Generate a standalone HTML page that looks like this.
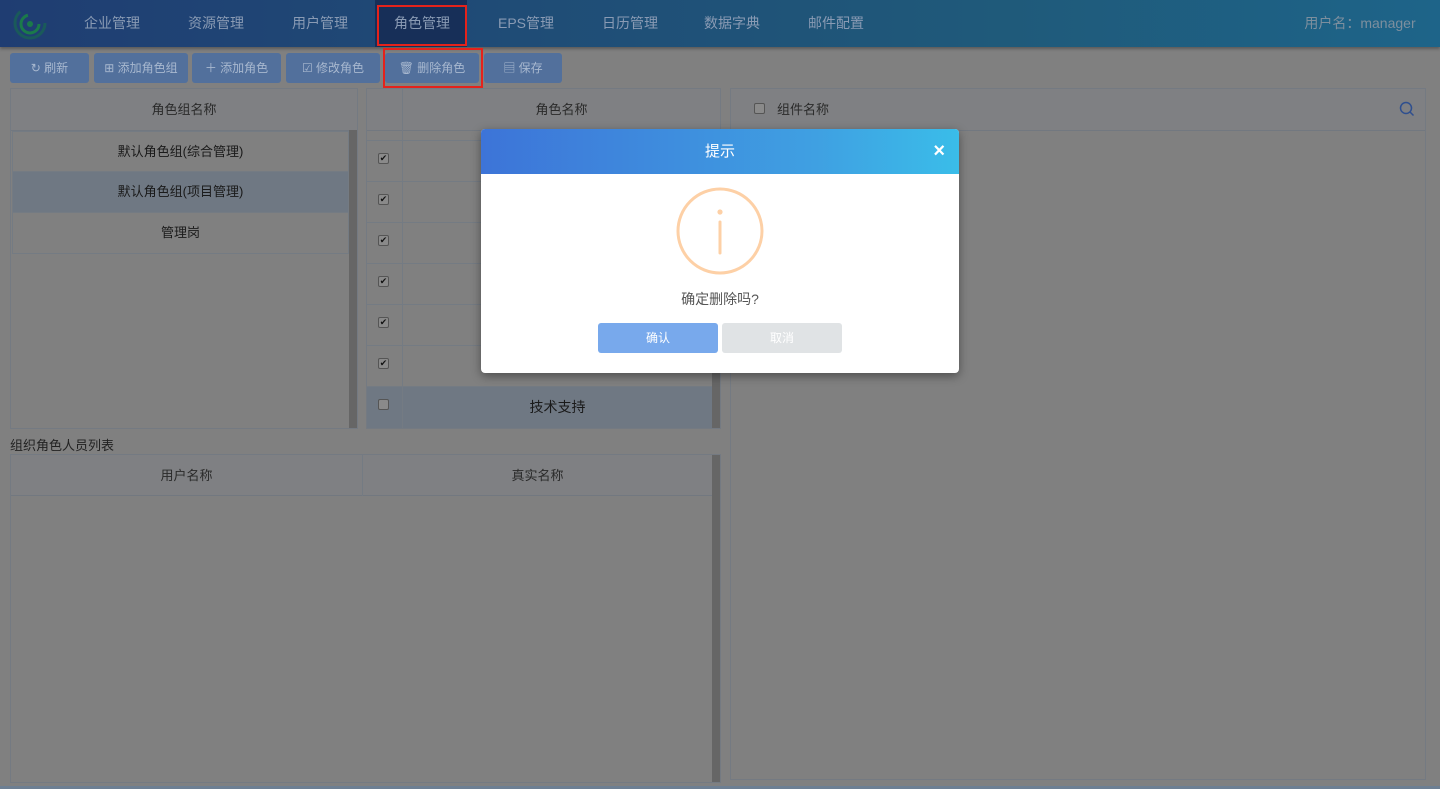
<!DOCTYPE html>
<html style="background:#808080"><head><meta charset="utf-8"><style>
*{margin:0;padding:0;box-sizing:border-box}
body{width:1440px;height:789px;background:#808080;position:relative;overflow:hidden;font-family:"Liberation Sans","Noto Sans CJK SC",sans-serif;font-size:13px;color:#1a1a1a}
.a{position:absolute}
.nav{left:0;top:0;width:1440px;height:47px;background:linear-gradient(90deg,#1f3d72,#1f5a7a 70%,#1e6489);box-shadow:0 2px 3px rgba(0,0,0,.3)}
.ni{top:0;height:47px;line-height:46px;color:#8a9bb4;font-size:14px;text-align:center}
.btn{top:53px;height:30px;background:#52709c;border-radius:3px;color:#a8b8cf;font-size:12px;line-height:30px;text-align:center}
.red{border:2px solid #e5221b}
.panel{border:1px solid #747a82}
.hd{background:#7f8083;border-bottom:1px solid #727880;text-align:center;line-height:41px;color:#2a2a2a}
.row{text-align:center;line-height:40px;border:1px solid #747b83;border-top:none}
.cb{width:11px;height:11px;border:1px solid #555;border-radius:2px;background:#8a8a8a;font-size:9px;line-height:9px;text-align:center;color:#111}
.sb{background:#666}
</style></head><body>
<div class="a nav"></div>
<svg class="a" style="left:12px;top:5px" width="36" height="36" viewBox="0 0 36 36"><circle cx="18" cy="18" r="15" fill="none" stroke="#1a5a5a" stroke-width="3" stroke-dasharray="60 40"/><circle cx="18" cy="19" r="9" fill="none" stroke="#1b7a4a" stroke-width="3" stroke-dasharray="40 20"/><circle cx="18" cy="19" r="3" fill="#1b7a4a"/></svg>
<div class="a ni" style="left:72px;width:80px">企业管理</div>
<div class="a ni" style="left:176px;width:80px">资源管理</div>
<div class="a ni" style="left:280px;width:80px">用户管理</div>
<div class="a" style="left:375px;top:0;width:92px;height:47px;background:#172f58"></div>
<div class="a red" style="left:377px;top:5px;width:90px;height:41px"></div>
<div class="a ni" style="left:377px;width:90px">角色管理</div>
<div class="a ni" style="left:486px;width:80px">EPS管理</div>
<div class="a ni" style="left:590px;width:80px">日历管理</div>
<div class="a ni" style="left:692px;width:80px">数据字典</div>
<div class="a ni" style="left:796px;width:80px">邮件配置</div>
<div class="a ni" style="left:1290px;width:140px;color:#7d8f9e">用户名：manager</div>

<div class="a btn" style="left:10px;width:79px">↻ 刷新</div>
<div class="a btn" style="left:94px;width:94px">⊞ 添加角色组</div>
<div class="a btn" style="left:192px;width:89px">＋ 添加角色</div>
<div class="a btn" style="left:286px;width:94px">☑ 修改角色</div>
<div class="a btn" style="left:385px;width:94px">🗑 删除角色</div>
<div class="a red" style="left:383px;top:48px;width:100px;height:40px"></div>
<div class="a btn" style="left:484px;width:78px">▤ 保存</div>

<div class="a panel" style="left:10px;top:88px;width:348px;height:341px"></div>
<div class="a hd" style="left:11px;top:89px;width:346px;height:42px">角色组名称</div>
<div class="a row" style="left:12px;top:131px;width:337px;height:41px;border-top:1px solid #747b83">默认角色组(综合管理)</div>
<div class="a row" style="left:12px;top:172px;width:337px;height:41px;background:#6f7883">默认角色组(项目管理)</div>
<div class="a row" style="left:12px;top:213px;width:337px;height:41px">管理岗</div>
<div class="a sb" style="left:349px;top:130px;width:8px;height:298px"></div>

<div class="a panel" style="left:366px;top:88px;width:355px;height:341px"></div>
<div class="a hd" style="left:367px;top:89px;width:353px;height:42px;padding-left:36px">角色名称</div>
<div class="a" style="left:402px;top:89px;width:1px;height:338px;background:#747b83"></div>
<div class="a" style="left:367px;top:140px;width:345px;height:1px;background:#747b83"></div>
<div class="a" style="left:367px;top:181px;width:345px;height:1px;background:#747b83"></div>
<div class="a" style="left:367px;top:222px;width:345px;height:1px;background:#747b83"></div>
<div class="a" style="left:367px;top:263px;width:345px;height:1px;background:#747b83"></div>
<div class="a" style="left:367px;top:304px;width:345px;height:1px;background:#747b83"></div>
<div class="a" style="left:367px;top:345px;width:345px;height:1px;background:#747b83"></div>
<div class="a" style="left:367px;top:386px;width:345px;height:42px;background:#6f7883;border-top:1px solid #747b83"></div>
<div class="a" style="left:402px;top:386px;width:1px;height:42px;background:#747b83"></div>
<div class="a cb" style="left:378px;top:153px">✔</div>
<div class="a cb" style="left:378px;top:194px">✔</div>
<div class="a cb" style="left:378px;top:235px">✔</div>
<div class="a cb" style="left:378px;top:276px">✔</div>
<div class="a cb" style="left:378px;top:317px">✔</div>
<div class="a cb" style="left:378px;top:358px">✔</div>
<div class="a cb" style="left:378px;top:399px"></div>
<div class="a" style="left:403px;top:397px;width:309px;text-align:center;font-size:14px">技术支持</div>
<div class="a sb" style="left:712px;top:130px;width:8px;height:298px"></div>

<div class="a panel" style="left:730px;top:88px;width:696px;height:692px"></div>
<div class="a hd" style="left:731px;top:89px;width:694px;height:42px;text-align:left;padding-left:46px">组件名称</div>
<div class="a cb" style="left:754px;top:103px"></div>
<svg class="a" style="left:1399px;top:101px" width="16" height="16" viewBox="0 0 16 16"><circle cx="7" cy="7" r="5.5" fill="none" stroke="#2f4f8f" stroke-width="1.5"/><path d="M11 11L14.5 14.5" stroke="#2f4f8f" stroke-width="1.5"/></svg>

<div class="a" style="left:10px;top:435px;color:#222">组织角色人员列表</div>
<div class="a panel" style="left:10px;top:454px;width:711px;height:329px"></div>
<div class="a hd" style="left:11px;top:455px;width:701px;height:41px"></div>
<div class="a" style="left:11px;top:455px;width:351px;line-height:41px;text-align:center;color:#2a2a2a">用户名称</div>
<div class="a" style="left:362px;top:455px;width:1px;height:41px;background:#747b83"></div>
<div class="a" style="left:363px;top:455px;width:349px;line-height:41px;text-align:center;color:#2a2a2a">真实名称</div>
<div class="a sb" style="left:712px;top:455px;width:8px;height:327px"></div>
<div class="a" style="left:0;top:786px;width:1440px;height:3px;background:#6d7f93"></div>

<div class="a" style="left:481px;top:129px;width:478px;height:244px;background:#fff;border-radius:4px;box-shadow:0 3px 10px rgba(0,0,0,.4);overflow:hidden">
<div style="height:45px;background:linear-gradient(90deg,#3d74d8,#3fa0e2 70%,#3abde9);color:#fff;font-size:15px;text-align:center;line-height:45px;position:relative">提示<span style="position:absolute;right:14px;top:0;font-size:20px;font-weight:bold">×</span></div>
<svg style="position:absolute;left:195px;top:58px" width="88" height="88" viewBox="0 0 88 88"><ellipse cx="44" cy="44" rx="42" ry="42" fill="none" stroke="#fdd0a6" stroke-width="3"/><circle cx="44" cy="25" r="2.6" fill="#fdd0a6"/><path d="M44 35V66" stroke="#fdd0a6" stroke-width="3" stroke-linecap="round"/></svg>
<div style="position:absolute;left:0;top:160px;width:478px;text-align:center;font-size:14px;color:#555">确定删除吗?</div>
<div style="position:absolute;left:117px;top:194px;width:120px;height:30px;background:#78a9ec;border-radius:3px;color:#fff;font-size:12px;line-height:30px;text-align:center">确认</div>
<div style="position:absolute;left:241px;top:194px;width:120px;height:30px;background:#e0e3e5;border-radius:3px;color:#fff;font-size:12px;line-height:30px;text-align:center">取消</div>
</div>
</body></html>
